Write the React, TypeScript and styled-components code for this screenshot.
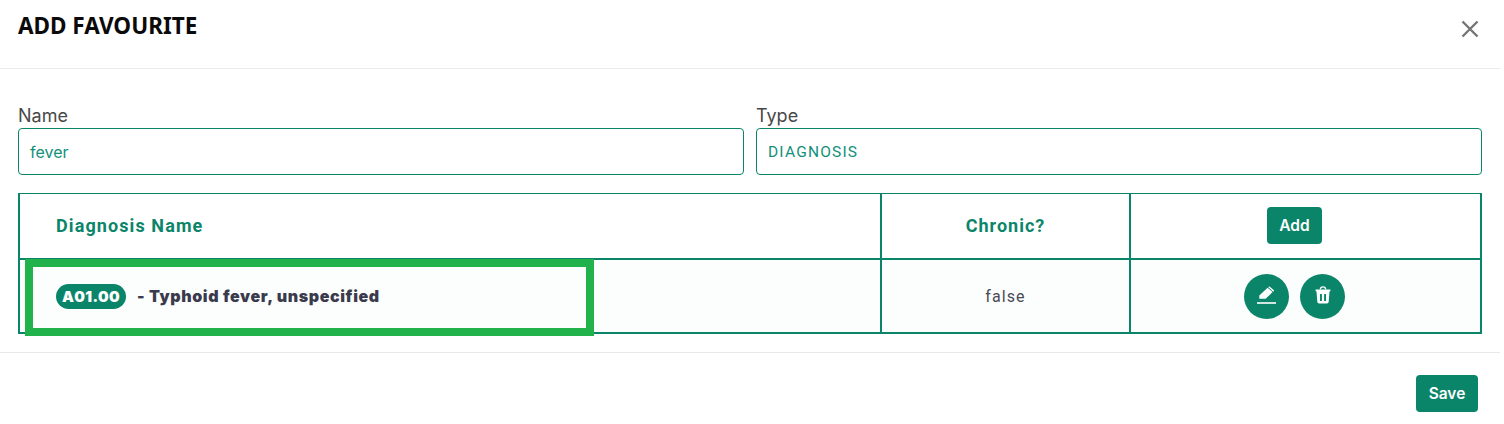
import styled, { createGlobalStyle } from "styled-components";

const GREEN = "#0b8569";

const GlobalStyle = createGlobalStyle`
    html, body {
        margin: 0;
        padding: 0;
        background: #fff;
        font-family: "Inter", sans-serif;
    }
`;

const EditIcon = () => (
    <svg width="19" height="18" viewBox="0 0 19 18" fill="#fff">
        <path d="M2.3 12.8V9.6L10.6 1.7l5 4.4-7 6.7z" />
        <path d="M11.6.8a1 1 0 0 1 1.3 0l3.8 3.3a.9.9 0 0 1 0 1.2l-.4.4-5-4.4z" />
        <rect x="0" y="16.2" width="19" height="1.6" />
    </svg>
);

const TrashIcon = () => (
    <svg width="16" height="18" viewBox="0 0 16 18" fill="#fff">
        <path
            fillRule="evenodd"
            d="M.6 3.4h14.8v1.9h-.9l-.8 10.5a1.7 1.7 0 0 1-1.7 1.6H4a1.7 1.7 0 0 1-1.7-1.6L1.5 5.3H.6zM5 8h1.9v7H5zM9.1 8H11v7H9.1z"
        />
        <path
            fill="none"
            stroke="#fff"
            strokeWidth="1.3"
            d="M5.3 3.4C5.4 1.6 6.4.8 8 .8s2.6.8 2.7 2.6"
        />
    </svg>
);

const CloseIcon = () => (
    <svg width="18" height="18" viewBox="0 0 18 18" stroke="#757575" strokeWidth="2.4">
        <path d="M1.5 1.5 16.5 16.5M16.5 1.5 1.5 16.5" />
    </svg>
);

export default function App() {
    return (
        <>
            <GlobalStyle />
            <Modal>
                <Header>
                    <Title>ADD FAVOURITE</Title>
                    <CloseButton aria-label="Close">
                        <CloseIcon />
                    </CloseButton>
                </Header>
                <Body>
                    <Fields>
                        <Field>
                            <Label>Name</Label>
                            <Input>fever</Input>
                        </Field>
                        <Field>
                            <Label>Type</Label>
                            <Input $spaced>DIAGNOSIS</Input>
                        </Field>
                    </Fields>
                    <TableWrap>
                        <Table>
                            <HeadRow>
                                <NameHead>Diagnosis Name</NameHead>
                                <CenterHead>Chronic?</CenterHead>
                                <ActionCell>
                                    <SmallButton>Add</SmallButton>
                                </ActionCell>
                            </HeadRow>
                            <DataRow>
                                <NameCell>
                                    <Badge>A01.00</Badge>
                                    <DiagnosisText>- Typhoid fever, unspecified</DiagnosisText>
                                </NameCell>
                                <ChronicCell>false</ChronicCell>
                                <ActionCell>
                                    <RoundButton aria-label="Edit">
                                        <EditIcon />
                                    </RoundButton>
                                    <RoundButton aria-label="Delete">
                                        <TrashIcon />
                                    </RoundButton>
                                </ActionCell>
                            </DataRow>
                        </Table>
                        <Highlight />
                    </TableWrap>
                </Body>
                <Footer>
                    <SaveButton>Save</SaveButton>
                </Footer>
            </Modal>
        </>
    );
}

const Modal = styled.div`
    width: 1500px;
    height: 424px;
    display: flex;
    flex-direction: column;
    background: #fff;
`;

const Header = styled.div`
    height: 69px;
    box-sizing: border-box;
    padding: 12px 21px 0 18px;
    display: flex;
    justify-content: space-between;
    align-items: flex-start;
    border-bottom: 1px solid #e9ecef;
`;

const Title = styled.h1`
    margin: 0;
    font-family: "Noto Sans", sans-serif;
    font-size: 22.5px;
    line-height: 28px;
    font-weight: 700;
    color: #0a0a0a;
`;

const CloseButton = styled.button`
    border: 0;
    background: none;
    padding: 0;
    margin-top: 8px;
    width: 18px;
    height: 18px;
    display: flex;
`;

const Body = styled.div`
    padding: 35px 18px 0;
    height: 284px;
    box-sizing: border-box;
    border-bottom: 1px solid #e9e9e9;
`;

const Fields = styled.div`
    display: grid;
    grid-template-columns: 726px 726px;
    gap: 12px;
`;

const Field = styled.div`
    display: flex;
    flex-direction: column;
`;

const Label = styled.label`
    font-size: 18px;
    line-height: 24px;
    color: #484848;
`;

const Input = styled.div<{ $spaced?: boolean }>`
    height: 47px;
    box-sizing: border-box;
    border: 1px solid ${GREEN};
    border-radius: 4px;
    padding: 0 11px;
    display: flex;
    align-items: center;
    font-family: ${({ $spaced }) => ($spaced ? `"Roboto"` : `"Inter"`)}, sans-serif;
    font-size: ${({ $spaced }) => ($spaced ? "15.5px" : "16px")};
    letter-spacing: ${({ $spaced }) => ($spaced ? "1.2px" : "0")};
    color: #11907a;
`;

const TableWrap = styled.div`
    position: relative;
    margin-top: 18px;
`;

const Table = styled.div`
    width: 1464px;
    box-sizing: border-box;
    border: 2px solid ${GREEN};
    border-top-width: 1px;
`;

const HeadRow = styled.div`
    display: grid;
    grid-template-columns: 860px 249px 1fr;
    height: 64px;
    border-bottom: 2px solid ${GREEN};
`;

const DataRow = styled.div`
    display: grid;
    grid-template-columns: 860px 249px 1fr;
    height: 72px;
    background: #fbfefd;
`;

const NameHead = styled.div`
    display: flex;
    align-items: center;
    padding: 0 0 1px 36px;
    font-family: "Roboto", sans-serif;
    font-size: 18px;
    font-weight: 700;
    letter-spacing: 1.1px;
    color: ${GREEN};
`;

const CenterHead = styled.div`
    display: flex;
    align-items: center;
    justify-content: center;
    padding-bottom: 1px;
    border-left: 2px solid ${GREEN};
    font-family: "Roboto", sans-serif;
    font-size: 18px;
    font-weight: 700;
    letter-spacing: 1px;
    color: ${GREEN};
`;

const NameCell = styled.div`
    display: flex;
    align-items: center;
    gap: 11px;
    padding-left: 36px;
`;

const ChronicCell = styled.div`
    display: flex;
    align-items: center;
    justify-content: center;
    border-left: 2px solid ${GREEN};
    font-family: "Roboto", sans-serif;
    font-size: 16px;
    letter-spacing: 1.1px;
    color: #4a4a55;
`;

const ActionCell = styled.div`
    display: flex;
    align-items: center;
    justify-content: center;
    gap: 11px;
    border-left: 2px solid ${GREEN};
    padding-right: 22px;
`;

const Badge = styled.span`
    height: 25px;
    width: 70px;
    border-radius: 13px;
    background: ${GREEN};
    color: #fff;
    display: flex;
    align-items: center;
    justify-content: center;
    font-size: 15px;
    font-weight: 900;
    letter-spacing: 0.4px;
`;

const DiagnosisText = styled.span`
    font-size: 16px;
    font-weight: 900;
    letter-spacing: 0.6px;
    color: #3a3a4c;
`;

const SmallButton = styled.button`
    width: 55px;
    height: 37px;
    margin-bottom: 2px;
    border: 0;
    padding: 0;
    border-radius: 4px;
    background: ${GREEN};
    color: #fff;
    font-family: "Inter", sans-serif;
    font-size: 15.5px;
    font-weight: 600;
`;

const RoundButton = styled.button`
    width: 45px;
    height: 45px;
    border: 0;
    padding: 0 0 3px;
    border-radius: 50%;
    background: ${GREEN};
    display: flex;
    align-items: center;
    justify-content: center;
`;

/* annotation drawn on top of the first row */
const Highlight = styled.div`
    position: absolute;
    left: 7px;
    top: 66px;
    width: 569px;
    height: 77px;
    box-sizing: border-box;
    border: 8px solid #22b24c;
    pointer-events: none;
`;

const Footer = styled.div`
    display: flex;
    justify-content: flex-end;
    padding: 22px 22px 0 0;
`;

const SaveButton = styled.button`
    width: 62px;
    height: 37px;
    border: 0;
    padding: 0;
    border-radius: 4px;
    background: ${GREEN};
    color: #fff;
    font-family: "Inter", sans-serif;
    font-size: 15.5px;
    font-weight: 600;
`;
